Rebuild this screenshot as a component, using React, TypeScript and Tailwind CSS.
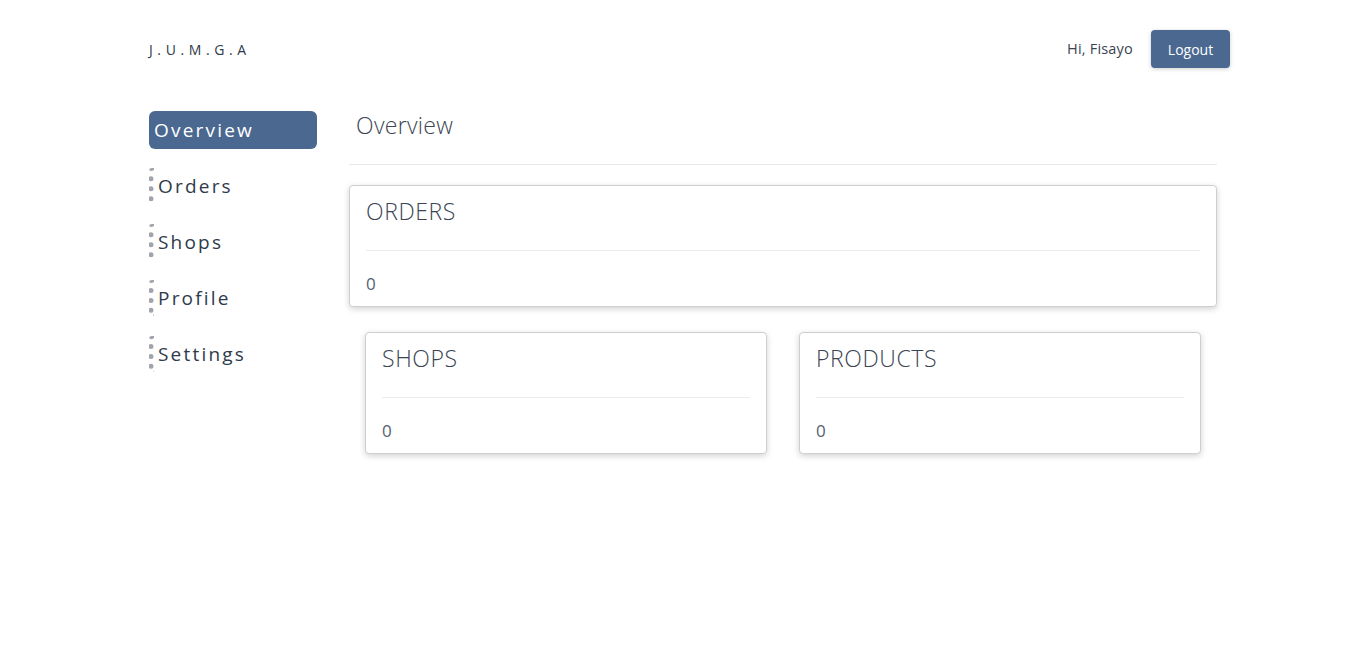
import React from "react";

const font = { fontFamily: '"Open Sans", "Liberation Sans", sans-serif' };

function NavItem({ label, active }: { label: string; active?: boolean }) {
  if (active) {
    return (
      <div className="h-[38px] mb-[18px] flex items-center rounded-md bg-[#4a6890] pl-[5px] text-white text-[19px] tracking-[2.2px]">
        {label}
      </div>
    );
  }
  return (
    <div className="h-[38px] mb-[18px] flex items-center">
      <div className="h-[36px] flex items-center border-l-[5px] border-dotted border-[#a3a3ad] rounded-[3px] pl-[4px] text-[#2f3a4a] text-[19px] tracking-[2.2px]">
        {label}
      </div>
    </div>
  );
}

function Card({ title, value }: { title: string; value: string }) {
  return (
    <div className="bg-white border border-[#cfcfcf] rounded-[4px] shadow-[0_2px_6px_rgba(0,0,0,0.18)] px-[16px] pt-[11px] pb-[11px]">
      <div className="text-[23px] text-[#3a4452] font-light leading-[28px] tracking-[0.6px]">{title}</div>
      <div className="mt-[25px] border-t border-[#ebebeb]" />
      <div className="mt-[22px] text-[17px] text-[#556170] leading-[22px]">{value}</div>
    </div>
  );
}

export default function App() {
  return (
    <div className="min-h-screen bg-white" style={font}>
      <div className="w-[1081px] ml-[149px]">
        <header className="flex items-center justify-between pt-[30px]">
          <div className="text-[14px] tracking-[4.6px] text-[#2f3a4a]">J.U.M.G.A</div>
          <div className="flex items-center">
            <span className="text-[14.5px] tracking-[0.2px] text-[#3a4452] mr-[18px]">Hi, Fisayo</span>
            <button className="h-[38px] w-[79px] rounded-[4px] bg-[#4a6890] text-white text-[14px] shadow-[0_1px_4px_rgba(0,0,0,0.2)]">
              Logout
            </button>
          </div>
        </header>
        <div className="flex mt-[43px]">
          <nav className="w-[168px] shrink-0">
            <NavItem label="Overview" active />
            <NavItem label="Orders" />
            <NavItem label="Shops" />
            <NavItem label="Profile" />
            <NavItem label="Settings" />
          </nav>
          <main className="ml-[32px] w-[868px]">
            <div className="pl-[7px] text-[23px] font-light text-[#3a4452] leading-[28px] tracking-[0.3px]">Overview</div>
            <div className="mt-[25px] border-t border-[#e8e8e8]" />
            <div className="mt-[20px]">
              <Card title="ORDERS" value="0" />
            </div>
            <div className="grid grid-cols-2 gap-[32px] px-[16px] mt-[25px]">
              <Card title="SHOPS" value="0" />
              <Card title="PRODUCTS" value="0" />
            </div>
          </main>
        </div>
      </div>
    </div>
  );
}
